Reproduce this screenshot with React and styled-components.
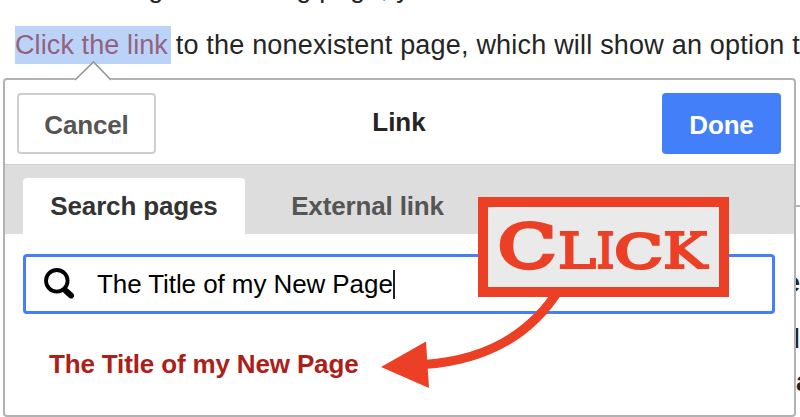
import React from "react";
import styled, { createGlobalStyle } from "styled-components";

const GlobalStyle = createGlobalStyle`
  * { box-sizing: border-box; }
  body { margin: 0; background: #fff; overflow: hidden; }
`;

const Page = styled.main`
  position: relative;
  width: 800px;
  height: 417px;
  overflow: hidden;
  background: #fff;
  color: #252525;
  font-family: "Liberation Sans", Arial, sans-serif;
`;

const Article = styled.div`
  display: flex;
  flex-direction: column;
  height: 78px;
  font-size: 27px;
  white-space: pre;
`;

const ArticleLine = styled.p`
  margin: ${(p) => p.$margin};
  height: 40px;
  line-height: 40px;
  letter-spacing: ${(p) => p.$tracking}px;
`;

const SelectedLink = styled.a`
  display: inline-block;
  width: 156px;
  height: 38px;
  margin-right: -3px;
  line-height: 38px;
  background: #bcd3f8;
  color: #93627f;
  letter-spacing: 0.1px;
`;

const Inspector = styled.section`
  display: flex;
  flex-direction: column;
  width: 793px;
  height: 339px;
  margin-left: 3px;
  background: #fff;
  border: 2px solid #b2b2b2;
  border-radius: 4px;
`;

const Header = styled.header`
  display: flex;
  justify-content: space-between;
  height: 84px;
  padding: 13px 13px 0 12px;
`;

const Title = styled.h1`
  margin: 0;
  padding-right: 20px;
  font-size: 26px;
  line-height: 59px;
`;

const Button = styled.button`
  width: ${(p) => (p.$primary ? 119 : 139)}px;
  height: 61px;
  padding: 4px 0 0;
  border: ${(p) => (p.$primary ? "0" : "2px solid #cfcfcf")};
  border-radius: 4px;
  background: ${(p) => (p.$primary ? "#427ff8" : "#fff")};
  color: ${(p) => (p.$primary ? "#fff" : "#555")};
  font: bold 26px "Liberation Sans", Arial, sans-serif;
  letter-spacing: -0.15px;
`;

const Tabs = styled.nav`
  display: flex;
  height: 70px;
  padding: 13px 0 0 18px;
  background: #ddd;
  border-top: 1px solid #cfcfcf;
`;

const Tab = styled.div`
  width: ${(p) => (p.$active ? 222 : 245)}px;
  text-align: center;
  line-height: 57px;
  border-radius: 4px 4px 0 0;
  background: ${(p) => (p.$active ? "#fff" : "transparent")};
  color: ${(p) => (p.$active ? "#333" : "#555")};
  font-size: 26px;
  font-weight: bold;
  letter-spacing: -0.15px;
`;

const SearchBox = styled.div`
  display: flex;
  align-items: center;
  width: 752px;
  height: 60px;
  margin: 20px 0 0 18px;
  padding-left: 17px;
  border: 3px solid #447ff7;
  border-radius: 4px;
  color: #000;
  font-size: 26px;
`;

const SearchIcon = styled.svg`
  width: 34px;
  height: 34px;
  flex: none;
`;

const Query = styled.span`
  margin-left: 20px;
  letter-spacing: -0.08px;
`;

const Caret = styled.span`
  width: 2px;
  height: 29px;
  background: #222;
`;

const Result = styled.a`
  margin: 33px 0 0 44px;
  color: #ad2018;
  font-size: 26px;
  font-weight: bold;
  line-height: 34px;
  letter-spacing: -0.15px;
`;

const Pointer = styled.svg`
  position: absolute;
  left: 74px;
  top: 60px;
`;

const Covered = styled.aside`
  position: absolute;
  left: 796px;
  top: 205px;
  width: 4px;
  height: 212px;
  overflow: hidden;
  border-top: 2px solid #b4b4b4;
  font-size: 27px;
  font-weight: bold;
`;

const CoveredLine = styled.div`
  margin: ${(p) => p.$margin};
  height: 30px;
  line-height: 30px;
`;

const Callout = styled.svg`
  position: absolute;
  left: 370px;
  top: 190px;
`;

const LETTERS = [
  { char: "C", x: 128, size: 60, width: 58, weight: 4 },
  { char: "L", x: 188, size: 49, width: 38, weight: 2.2 },
  { char: "I", x: 226.5, size: 49, width: 18, weight: 2.2 },
  { char: "C", x: 244.5, size: 47.5, width: 48, weight: 3.2 },
  { char: "K", x: 293, size: 49, width: 44, weight: 2.2 },
];

export default function App() {
  return (
    <Page>
      <GlobalStyle />
      <Article>
        <ArticleLine $margin="-32px 0 0 18px" $tracking={0.3}>
          When using the existing page, you
        </ArticleLine>
        <ArticleLine $margin="17px 0 0 15px" $tracking={0.2}>
          <SelectedLink>Click the link</SelectedLink>
          {" to the nonexistent page, which will show an option to"}
        </ArticleLine>
      </Article>
      <Inspector>
        <Header>
          <Button>Cancel</Button>
          <Title>Link</Title>
          <Button $primary>Done</Button>
        </Header>
        <Tabs>
          <Tab $active>Search pages</Tab>
          <Tab>External link</Tab>
        </Tabs>
        <SearchBox>
          <SearchIcon viewBox="0 0 34 34" fill="none" stroke="#000">
            <circle cx="13.8" cy="13.8" r="10.8" strokeWidth="3.8" />
            <path d="M20 21.5l3 2.5" strokeWidth="4" />
            <path d="M23 24l5 4.4" strokeWidth="6" strokeLinecap="round" />
          </SearchIcon>
          <Query>The Title of my New Page</Query>
          <Caret />
        </SearchBox>
        <Result>The Title of my New Page</Result>
      </Inspector>
      <Pointer width="40" height="22">
        <path d="M0 20L19.5 2L38 20V22H0z" fill="#fff" />
        <path d="M1 20L19.5 2L37 20" fill="none" stroke="#999" strokeWidth="1.7" />
      </Pointer>
      <Covered>
        <CoveredLine $margin="61px 0 0 -11px">e</CoveredLine>
        <CoveredLine $margin="26px 0 0 -12.5px">d</CoveredLine>
        <CoveredLine $margin="13px 0 0 0">a</CoveredLine>
      </Covered>
      <Callout width="362" height="210">
        <path d="M190 98Q147 168 54 174.5" fill="none" stroke="#eb4025" strokeWidth="9.2" />
        <path d="M11 177L56 151.5L59 198z" fill="#eb4025" />
        <rect x="113" y="12" width="241" height="90" fill="#eaeaea" stroke="#eb4025" strokeWidth="10" />
        <text
          y="78"
          fill="#eb4025"
          stroke="#eb4025"
          fontFamily="DejaVu Serif, serif"
        >
          {LETTERS.map((l, i) => (
            <tspan
              key={i}
              x={l.x}
              fontSize={l.size}
              strokeWidth={l.weight}
              textLength={l.width}
              lengthAdjust="spacingAndGlyphs"
            >
              {l.char}
            </tspan>
          ))}
        </text>
      </Callout>
    </Page>
  );
}
